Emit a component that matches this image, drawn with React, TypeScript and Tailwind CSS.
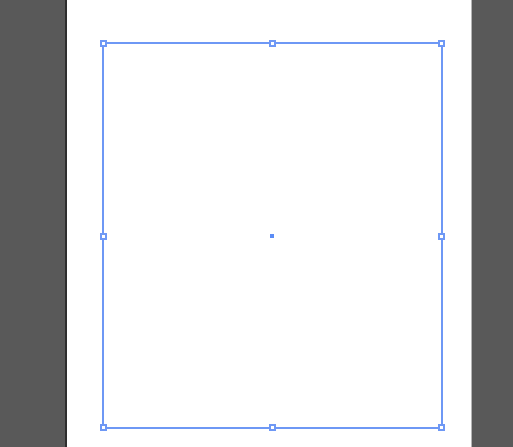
import React from "react";

const base = "absolute w-[7px] h-[7px] bg-white border-2 border-solid border-[#6e98f5]";

const positions = [
  "-left-[4px] -top-[4px]",
  "left-[165px] -top-[4px]",
  "-right-[4px] -top-[4px]",
  "-left-[4px] top-[189px]",
  "-right-[4px] top-[189px]",
  "-left-[4px] -bottom-[4px]",
  "left-[165px] -bottom-[4px]",
  "-right-[4px] -bottom-[4px]",
];

export default function App() {
  return (
    <div className="flex w-[513px] h-[447px] bg-[#595959] overflow-hidden">
      <div className="w-[65px] shrink-0" />
      <div className="w-[407px] shrink-0 bg-white border-l-2 border-l-[#2e2e2e] border-r border-r-[#b5b5b5] pl-[35px] pt-[42px]">
        <div className="relative w-[341px] h-[387px] border-2 border-[#6e98f5]">
          {positions.map((p) => (
            <div key={p} className={base + " " + p} />
          ))}
          <div className="absolute left-[166px] top-[190px] w-[4px] h-[4px] bg-[#5b8cf6]" />
        </div>
      </div>
      <div className="flex-1" />
    </div>
  );
}
